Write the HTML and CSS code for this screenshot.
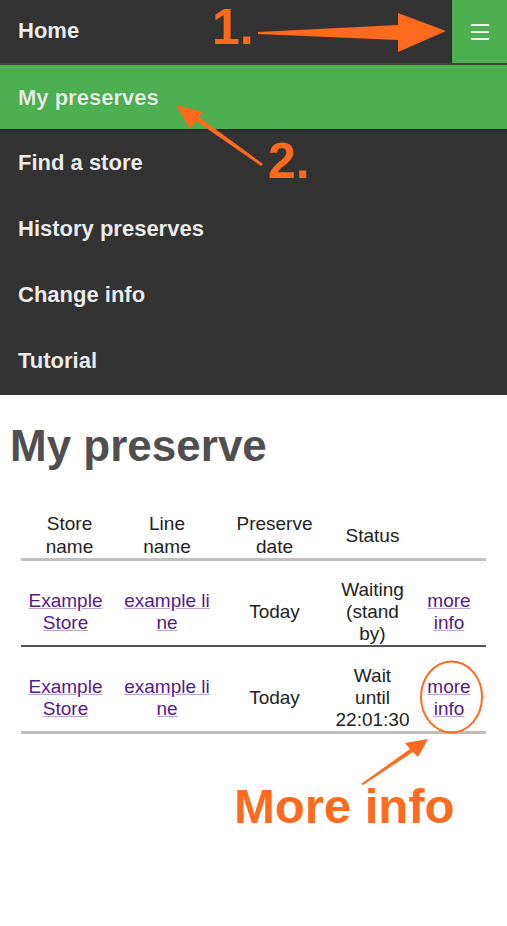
FILE: index.html
```html
<!DOCTYPE html>
<html lang="en">
<head>
<meta charset="utf-8">
<title>My preserve</title>
<link rel="stylesheet" href="styles.css">
</head>
<body>
<nav class="topnav">
  <div class="bar">
    <a class="item" href="#">Home</a>
    <a class="burger" href="#" aria-label="Menu">
      <svg width="18" height="16" viewBox="0 0 18 16"><rect x="0" y="0" width="18" height="2" fill="#f2f2f2"/><rect x="0" y="7" width="18" height="2" fill="#f2f2f2"/><rect x="0" y="14" width="18" height="2" fill="#f2f2f2"/></svg>
    </a>
  </div>
  <a class="item active" href="#">My preserves</a>
  <a class="item" href="#">Find a store</a>
  <a class="item" href="#">History preserves</a>
  <a class="item" href="#">Change info</a>
  <a class="item" href="#">Tutorial</a>
</nav>
<main class="content">
  <h1 class="title">My preserve</h1>
  <table class="preserves">
    <colgroup>
      <col class="c1"><col class="c2"><col class="c3"><col class="c4"><col class="c5">
    </colgroup>
    <thead>
      <tr><th>Store<br>name</th><th>Line<br>name</th><th>Preserve<br>date</th><th>Status</th><th></th></tr>
    </thead>
    <tbody>
      <tr>
        <td class="store"><a href="#">Example Store</a></td>
        <td class="line"><a href="#">example line</a></td>
        <td>Today</td>
        <td>Waiting (stand by)</td>
        <td><a href="#">more info</a></td>
      </tr>
      <tr>
        <td class="store"><a href="#">Example Store</a></td>
        <td class="line"><a href="#">example line</a></td>
        <td>Today</td>
        <td>Wait until 22:01:30</td>
        <td><a href="#">more info</a></td>
      </tr>
    </tbody>
  </table>
</main>
<svg class="notes" width="507" height="926" viewBox="0 0 507 926">
  <g fill="#ff6a1f">
    <text x="212" y="44" class="num">1.</text>
    <polygon points="258,32 398,25 398,13 446,31 398,52 398,40 258,34"/>
    <text x="268" y="178" class="num">2.</text>
    <polygon points="261,166 196,121 190,129 176,105 203,112 199,117 263,164"/>
    <polygon points="361,784 410,749 405,743 428,739 418,757 413,752 363,785"/>
    <text x="234" y="823" class="big">More info</text>
  </g>
  <ellipse cx="451.5" cy="697" rx="30.5" ry="35.5" fill="none" stroke="#ff6a1f" stroke-width="2"/>
</svg>
</body>
</html>
```
FILE: styles.css
```css
html, body {
  margin: 0;
  padding: 0;
  background: #fff;
}
body {
  font-family: "Liberation Sans", Arial, sans-serif;
  position: relative;
  width: 507px;
  min-height: 926px;
}
.topnav {
  display: flex;
  flex-direction: column;
  background: #333;
}
.bar {
  display: flex;
  height: 63px;
  border-bottom: 2px solid #3b4a3b;
}
.bar .item {
  flex: 1;
  height: 63px;
  border-bottom: none;
  padding-bottom: 2px;
  box-sizing: border-box;
}
.item {
  display: flex;
  align-items: center;
  height: 64px;
  padding-left: 18px;
  color: #ececec;
  text-decoration: none;
  font-weight: bold;
  font-size: 22px;
  border-bottom: 2px solid #333;
  text-shadow: 0 0 1px rgba(0,0,0,0.4);
}
.item.active {
  background: #4caf50;
  color: #e4efe4;
  border-bottom-color: #2b2b2b;
  padding-top: 1px;
  box-sizing: border-box;
  height: 66px;
}
.burger {
  width: 55px;
  border-left: 1px solid #2a2a2a;
  background: #4caf50;
  display: flex;
  align-items: center;
  justify-content: center;
}
.burger svg {
  display: block;
  margin-top: 1px;
  margin-left: 1px;
}
.content {
  padding: 0 8px;
}
.title {
  margin: 26px 0 0 2px;
  font-size: 44px;
  font-weight: bold;
  color: #4f4f4f;
  line-height: normal;
}
.preserves {
  margin: 41px auto 0;
  width: 465px;
  table-layout: fixed;
  border-collapse: collapse;
  font-size: 19px;
  color: #222;
  text-align: center;
}
.c1 { width: 97px; }
.c2 { width: 98px; }
.c3 { width: 117px; }
.c4 { width: 79px; }
.c5 { width: 74px; }
.preserves th {
  font-weight: normal;
  padding: 0 2px 0;
  vertical-align: middle;
  border-bottom: 3px solid #c0c0c0;
  line-height: 23px;
}
.preserves td {
  padding: 18px 2px 0;
  vertical-align: middle;
  line-height: 22px;
}
.preserves td.store {
  padding-right: 10px;
}
.preserves tbody tr:first-child td {
  border-bottom: 2px solid #555;
}
.preserves tbody tr:last-child td {
  border-bottom: 3px solid #bdbdbd;
}
.preserves a {
  color: #551a8b;
  text-decoration: underline;
  text-decoration-color: #b9a3d0;
}
.preserves .line {
  word-break: break-all;
}
.notes {
  position: absolute;
  left: 0;
  top: 0;
  pointer-events: none;
}
.notes .num {
  font-family: "Liberation Sans", Arial, sans-serif;
  font-weight: bold;
  font-size: 50px;
}
.notes .big {
  font-family: "Liberation Sans", Arial, sans-serif;
  font-weight: bold;
  font-size: 49px;
}
```
